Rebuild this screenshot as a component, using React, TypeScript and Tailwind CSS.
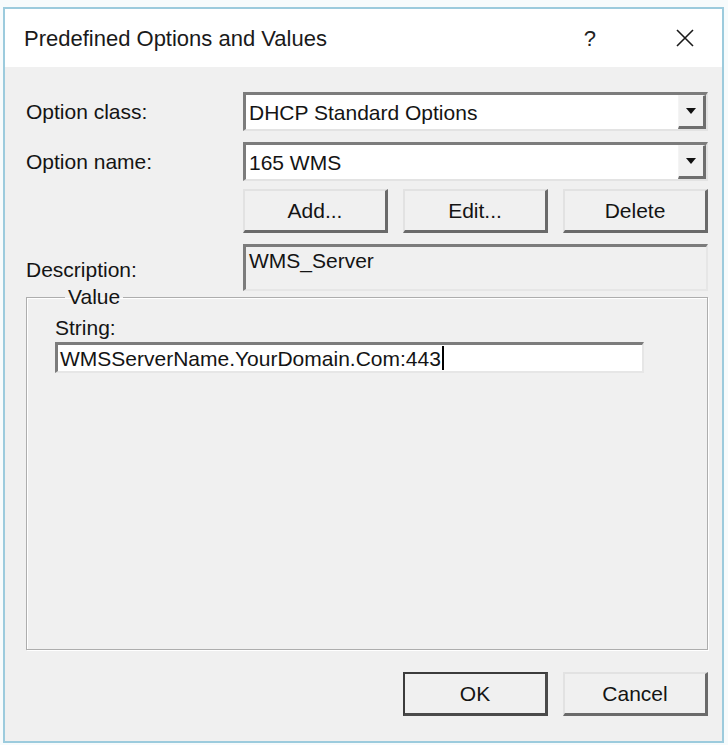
import React from 'react';

const font = { fontFamily: '"Liberation Sans", Arial, sans-serif' };

function Combo({ value }: { value: string }) {
  return (
    <div className="flex h-[39px] w-[465px] border-t-[3px] border-l-[3px] border-b-[2px] border-r-[2px] border-t-[#7c7c7c] border-l-[#7c7c7c] border-b-[#e3e3e3] border-r-[#e3e3e3] bg-white">
      <div className="flex flex-1 items-center pl-[3px] text-[21px] leading-none text-[#141414]">{value}</div>
      <div className="flex w-[28px] items-center justify-center border-t-[1px] border-l-[1px] border-b-[3px] border-r-[3px] border-t-[#f4f4f4] border-l-[#f4f4f4] border-b-[#6e6e6e] border-r-[#6e6e6e] bg-[#f0f0f0]">
        <svg width="10" height="6" viewBox="0 0 10 6">
          <path d="M0 0 H10 L5 6 Z" fill="#111" />
        </svg>
      </div>
    </div>
  );
}

function PushButton({ label, isDefault }: { label: string; isDefault?: boolean }) {
  const edge = isDefault
    ? 'border-t-[2px] border-l-[2px] border-b-[3px] border-r-[3px] border-t-[#3c3c3c] border-l-[#3c3c3c] border-b-[#4a4a4a] border-r-[#4a4a4a]'
    : 'border-t-[2px] border-l-[2px] border-b-[3px] border-r-[3px] border-t-[#e2e2e2] border-l-[#e2e2e2] border-b-[#6a6a6a] border-r-[#6a6a6a]';
  return (
    <div className={`flex h-[44px] w-[145px] items-center justify-center bg-[#f0f0f0] text-[21px] leading-none text-[#141414] ${edge}`}>
      {label}
    </div>
  );
}

export default function App() {
  return (
    <div className="h-[745px] w-[728px] bg-[#f7fbfc] pl-[3px] pt-[7px]" style={font}>
      <div className="flex h-[736px] w-[721px] flex-col border-2 border-[#9ccbdd]">
        {/* title bar */}
        <div className="flex h-[58px] items-center bg-white pl-[19px]">
          <span className="text-[22px] text-[#1a1a1a]">Predefined Options and Values</span>
          <span className="ml-auto mr-[80px] text-[22px] text-[#222]">?</span>
          <svg className="mr-[28px]" width="18" height="18" viewBox="0 0 18 18">
            <path d="M1 1 L17 17 M17 1 L1 17" stroke="#1a1a1a" strokeWidth="1.6" />
          </svg>
        </div>

        {/* dialog body */}
        <div className="flex flex-1 flex-col bg-[#f0f0f0] pl-[21px] pr-[12px] pt-[25px]">
          <div className="flex items-center">
            <span className="w-[217px] text-[21px] text-[#141414]">Option class:</span>
            <Combo value="DHCP Standard Options" />
          </div>
          <div className="mt-[11px] flex items-center">
            <span className="w-[217px] text-[21px] text-[#141414]">Option name:</span>
            <Combo value="165 WMS" />
          </div>
          <div className="mt-[8px] flex gap-[15px] pl-[217px]">
            <PushButton label="Add..." />
            <PushButton label="Edit..." />
            <PushButton label="Delete" />
          </div>

          <div className="mt-[11px] flex items-center">
            <span className="w-[217px] pt-[4px] text-[21px] text-[#141414]">Description:</span>
            <div className="h-[47px] w-[465px] border-t-[3px] border-l-[3px] border-b-[2px] border-r-[2px] border-t-[#7c7c7c] border-l-[#7c7c7c] border-b-[#e6e6e6] border-r-[#e6e6e6] bg-[#f0f0f0] pl-[3px] pt-[2px] text-[21px] leading-[24px] text-[#141414]">
              WMS_Server
            </div>
          </div>

          <fieldset className="-mt-[6px] h-[365px] w-[682px] border border-[#adadad] pl-[28px] shadow-[inset_1px_1px_0_#fff,1px_1px_0_#fff]">
            <legend className="ml-[10px] px-[3px] text-[21px] leading-[24px] text-[#141414]">Value</legend>
            <div className="mt-[7px] text-[21px] leading-[24px] text-[#141414]">String:</div>
            <div className="mt-[2px] flex h-[31px] w-[589px] items-center border-t-[3px] border-l-[3px] border-b-[2px] border-r-[2px] border-t-[#7c7c7c] border-l-[#7c7c7c] border-b-[#e6e6e6] border-r-[#e6e6e6] bg-white pl-[2px] text-[21px] leading-none text-[#141414]">
              WMSServerName.YourDomain.Com:443
              <span className="ml-[1px] inline-block h-[24px] w-[2px] bg-black" />
            </div>
          </fieldset>

          <div className="mt-[22px] flex gap-[15px] pl-[377px]">
            <PushButton label="OK" isDefault />
            <PushButton label="Cancel" />
          </div>
        </div>
      </div>
    </div>
  );
}
